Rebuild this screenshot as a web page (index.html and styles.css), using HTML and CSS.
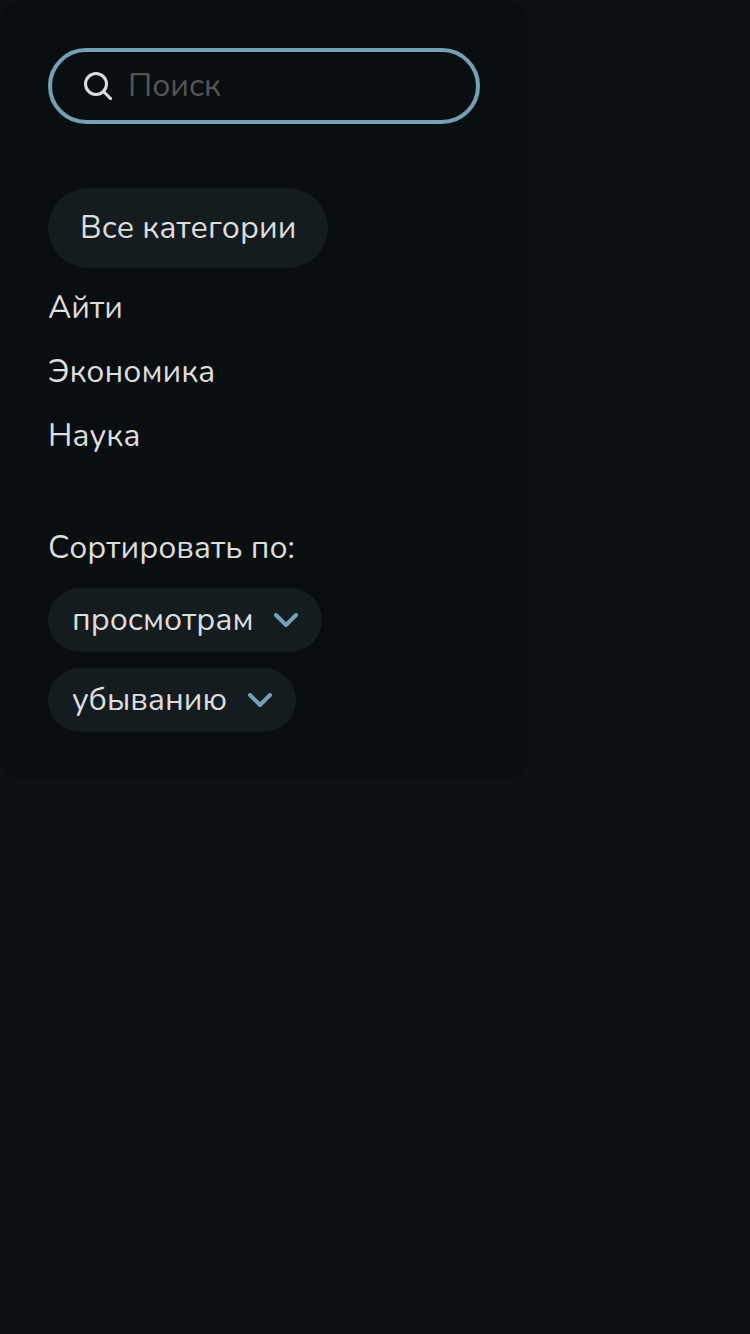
FILE: index.html
```
<!DOCTYPE html>
<html lang="ru">
<head>
<meta charset="utf-8">
<meta name="viewport" content="width=device-width, initial-scale=1">
<title>Категории</title>
<link rel="stylesheet" href="styles.css">
</head>
<body>
<aside class="sidebar">
  <label class="search">
    <svg class="search-icon" viewBox="0 0 28 28" aria-hidden="true"><circle cx="12" cy="12" r="10.5"/><path d="M20 20l6.6 6.6"/></svg>
    <input class="search-input" type="search" placeholder="Поиск" aria-label="Поиск">
  </label>
  <nav class="categories">
    <a class="category category-active" href="#all">Все категории</a>
    <a class="category" href="#it">Айти</a>
    <a class="category" href="#economy">Экономика</a>
    <a class="category" href="#science">Наука</a>
  </nav>
  <section class="sorting">
    <h2 class="sorting-title">Сортировать по:</h2>
    <div class="sort-field">
      <select class="sort-select" aria-label="Сортировать по"><option>просмотрам</option></select>
      <svg class="chevron" viewBox="0 0 24 14" aria-hidden="true"><path d="M2 2l10 10L22 2"/></svg>
    </div>
    <div class="sort-field">
      <select class="sort-select" aria-label="Порядок"><option>убыванию</option></select>
      <svg class="chevron" viewBox="0 0 24 14" aria-hidden="true"><path d="M2 2l10 10L22 2"/></svg>
    </div>
  </section>
</aside>
</body>
</html>
```
FILE: styles.css
```
* { box-sizing: border-box; }
body {
  margin: 0;
  min-height: 100vh;
  background: #0c1114;
  color: #dddddd;
  font: 400 32px/40px Nunito, "Open Sans", sans-serif;
}
.sidebar {
  width: 100%;
  max-width: 528px;
  padding: 48px;
  border-radius: 24px;
  background: #090e10;
}
.search {
  display: flex;
  align-items: center;
  gap: 16px;
  height: 76px;
  padding: 0 32px;
  border: 4px solid #74a2b4;
  border-radius: 38px;
}
.search-icon {
  flex: none;
  width: 28px;
  height: 28px;
  fill: none;
  stroke: #dddddd;
  stroke-width: 3;
  stroke-linecap: round;
}
.search-input {
  flex: 1;
  min-width: 0;
  padding: 0;
  border: 0;
  outline: 0;
  background: none;
  color: inherit;
  font: inherit;
}
.search-input::placeholder { color: #555555; opacity: 1; }
.categories {
  display: flex;
  flex-direction: column;
  align-items: flex-start;
  gap: 24px;
  margin-top: 64px;
}
.category { color: inherit; text-decoration: none; }
.category-active {
  margin-bottom: -4px;
  padding: 20px 32px;
  border-radius: 40px;
  background: #151c1f;
}
.sorting {
  display: flex;
  flex-direction: column;
  align-items: flex-start;
  gap: 16px;
  margin-top: 72px;
}
.sorting-title { margin: 0 0 4px; font: inherit; }
.sort-field {
  display: grid;
  align-items: center;
}
.sort-select {
  grid-area: 1 / 1;
  height: 64px;
  padding: 0 68px 0 24px;
  border: 0;
  border-radius: 32px;
  appearance: none;
  background: #151c1f;
  color: inherit;
  font: inherit;
}
.chevron {
  grid-area: 1 / 1;
  justify-self: end;
  width: 24px;
  height: 14px;
  margin-right: 24px;
  fill: none;
  stroke: #74a2b4;
  stroke-width: 4;
  stroke-linecap: round;
  stroke-linejoin: round;
  pointer-events: none;
}
```
